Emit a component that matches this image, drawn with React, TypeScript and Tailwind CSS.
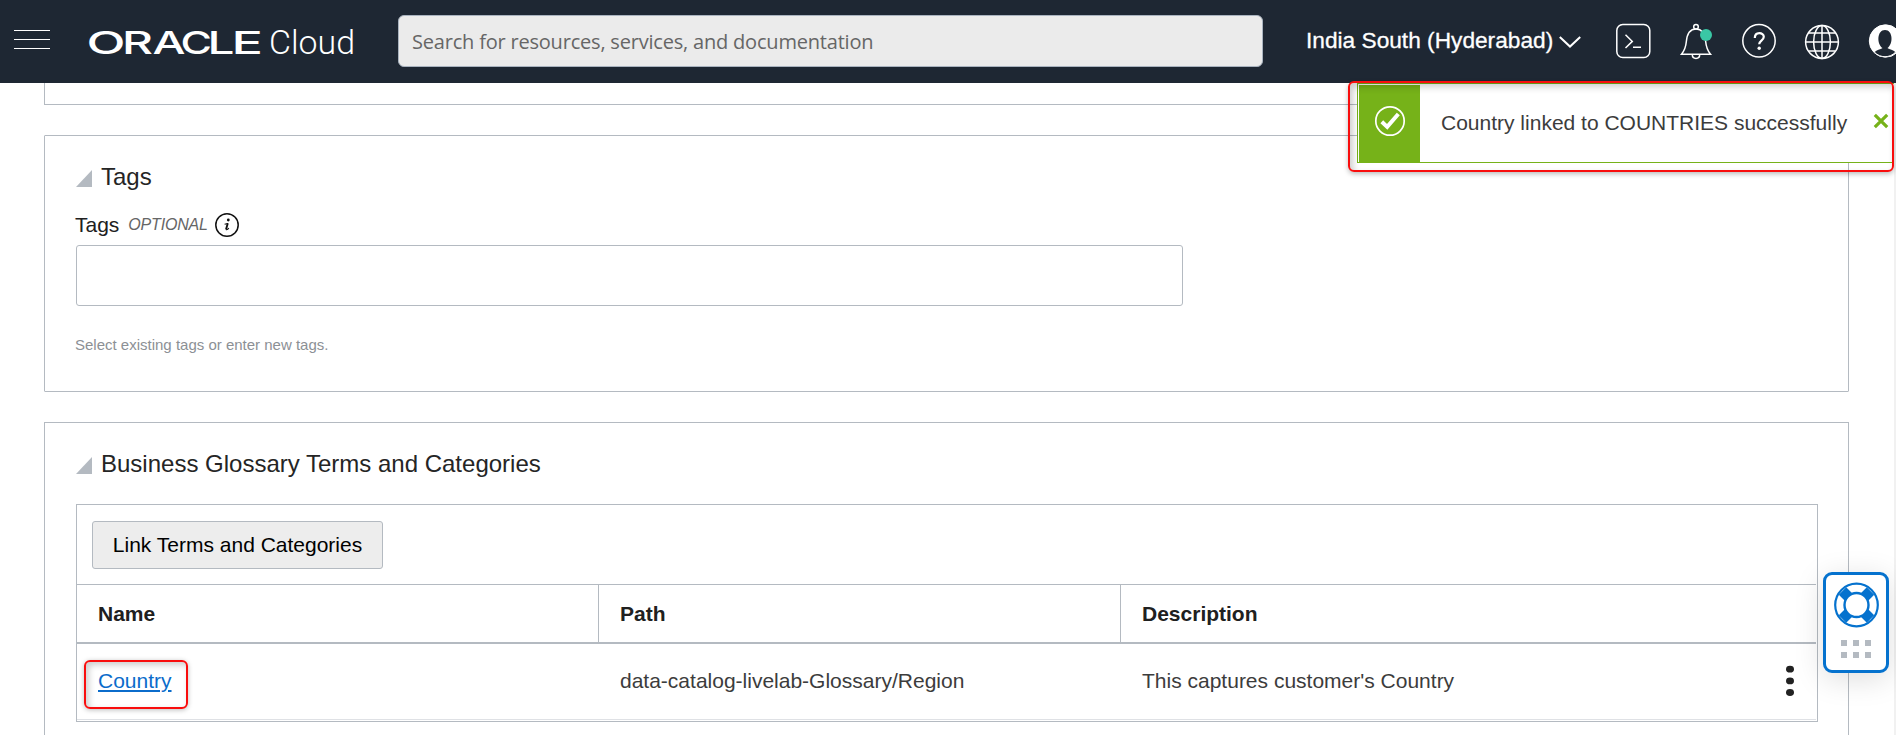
import type { ReactNode } from "react";

const wordmark = [
  { letter: "O", x: 0.5, width: 39 },
  { letter: "R", x: 36, width: 31 },
  { letter: "A", x: 66.5, width: 33 },
  { letter: "C", x: 94.5, width: 31.5 },
  { letter: "L", x: 121.5, width: 27 },
  { letter: "E", x: 145.5, width: 31.5 },
];

function Header() {
  return (
    <header className="flex h-[83px] w-full shrink-0 items-start overflow-hidden bg-[#1e2733] text-white">
      <button aria-label="Menu" className="mt-[30px] ml-[14px] flex w-9 shrink-0 flex-col gap-2">
        <span className="h-px w-full bg-white" />
        <span className="h-px w-full bg-white" />
        <span className="h-px w-full bg-white" />
      </button>
      <svg className="mt-5 ml-[36px] h-[44px] w-[272px] shrink-0" viewBox="0 0 272 44" fill="#fff">
        <text y="34" fontFamily="Inter, sans-serif" fontWeight="500" fontSize="31">
          {wordmark.map(({ letter, x, width }) => (
            <tspan key={letter} x={x} textLength={width} lengthAdjust="spacingAndGlyphs">
              {letter}
            </tspan>
          ))}
        </text>
        <text x="183" y="33.5" fontFamily="Roboto, sans-serif" fontWeight="300" fontSize="33" textLength="86" lengthAdjust="spacingAndGlyphs">
          Cloud
        </text>
      </svg>
      <div className="mt-[15px] ml-[40px] flex h-[52px] w-[865px] shrink-0 items-center rounded-[6px] border border-[#a9b3bf] bg-[#ebebeb] pt-[2px] pl-[13px] font-['Open_Sans',sans-serif] text-[20px] tracking-[-0.2px] text-[#666]">
        <span className="whitespace-nowrap">Search for resources, services, and documentation</span>
      </div>
      <div className="mt-6 ml-[43px] flex shrink-0 items-center text-[22.7px] leading-8">
        <span className="w-[248px] whitespace-nowrap [-webkit-text-stroke:0.3px_white]">India South (Hyderabad)</span>
        <svg className="mt-1 ml-[5px] h-3 w-[22px]" viewBox="0 0 22 12" fill="none" stroke="#fff" strokeWidth="2">
          <path d="M.8 1 11 10.6 21.2 1" />
        </svg>
      </div>
      <svg className="mt-[22px] ml-[33px] h-10 w-10 shrink-0" viewBox="0 0 40 40" fill="none" stroke="#fff" strokeWidth="1.5">
        <rect x="2.8" y="2.5" width="33" height="33" rx="6" />
        <path d="m11.5 12.8 6.800 6.600-6.800 6.600M19 25.200h8" />
      </svg>
      <svg className="mt-[22px] ml-[23px] h-10 w-10 shrink-0" viewBox="0 0 40 40" fill="none" stroke="#fff" strokeWidth="1.5">
        <path d="M4.500 32.200c3-3.600 4.300-7 4.800-12.500.7-7.500 3.200-12.700 9.700-12.700s9 5.200 9.700 12.700c.5 5.500 1.800 8.900 4.800 12.500Z" />
        <circle cx="19" cy="4.800" r="2.300" />
        <path d="M15.300 32.500c0 5.200 7.400 5.200 7.400 0" />
        <circle cx="29" cy="13" r="6" fill="#3ac7a5" stroke="none" />
      </svg>
      <svg className="mt-[22px] ml-[23px] h-10 w-10 shrink-0" viewBox="0 0 40 40" fill="none" stroke="#fff" strokeWidth="1.5">
        <circle cx="19" cy="18.800" r="16.200" />
        <path strokeWidth="2.200" d="M14.800 16c0-6.800 9-6 9-1.200 0 3.700-4.600 4-4.600 7.400" />
        <circle cx="19.200" cy="26.300" r="1.700" fill="#fff" stroke="none" />
      </svg>
      <svg className="mt-[22px] ml-[23px] h-10 w-10 shrink-0" viewBox="0 0 40 40" fill="none" stroke="#fff" strokeWidth="1.5">
        <circle cx="19" cy="20" r="16.400" />
        <ellipse cx="19" cy="20" rx="8.400" ry="16.400" />
        <path d="M19 3.500v33M2.500 20h33M5.500 11h27M5.500 29h27" />
      </svg>
      <svg className="mt-[22px] ml-[23px] h-10 w-10 shrink-0" viewBox="0 0 40 40">
        <circle cx="19.500" cy="19" r="16.200" fill="#fff" stroke="#fff" strokeWidth="1" />
        <path d="M8.500 30.200c3-3 6.500-2.700 8-4.200-6-4-5.500-18 2.500-18s8.500 14 2.500 18c1.500 1.500 5 1.200 8 4.200-5.500 6-15.500 6-21 0Z" fill="#1e2733" />
        <path d="M8.500 30.200c5.500 6 15.500 6 21 0" fill="none" stroke="#fff" strokeWidth="1" />
      </svg>
    </header>
  );
}

function PanelTitle({ children }: { children: ReactNode }) {
  return (
    <h2 className="flex h-8 items-center text-[24px] leading-8 text-[#252525]">
      <svg className="mt-[2px] mr-[9px] h-[17px] w-[16px]" viewBox="0 0 16 17">
        <path d="M16 0v17H0Z" fill="#b4bac1" />
      </svg>
      {children}
    </h2>
  );
}

const columns = ["Name", "Path", "Description"];

export default function App() {
  return (
    <div className="relative flex h-[735px] w-[1896px] flex-col overflow-hidden bg-white font-['Liberation_Sans',Arial,sans-serif] text-[21px] text-[#3c3c3c]">
      <Header />
      <div className="flex min-h-0 flex-1">
        <main className="flex w-[1894px] shrink-0 flex-col pr-[45px] pl-[44px]">
          <section className="h-[22px] shrink-0 border border-t-0 border-[#b4bac1]" />

          <section className="mt-[30px] h-[257px] shrink-0 rounded-[1px] border border-[#b4bac1] pt-[25px] pl-[31px]">
            <PanelTitle>Tags</PanelTitle>
            <div className="mt-[20px] flex h-6 items-center leading-6 text-[#202020]">
              <span className="-ml-px">Tags</span>
              <span className="ml-[9px] text-[16px] tracking-[-0.2px] text-[#666] italic">OPTIONAL</span>
              <svg className="ml-[7px] h-6 w-6" viewBox="0 0 24 24" fill="none" stroke="#111" strokeWidth="1.500">
                <circle cx="12" cy="12" r="11.200" />
                <circle cx="13.300" cy="7" r="1.400" fill="#111" stroke="none" />
                <path strokeWidth="1.900" d="M12.800 10.200 11 16.600" />
                <path strokeWidth="1.100" d="m9.600 11.200 3.300-.7M11 16.700c1.200.2 2.200-.5 2.800-1.600" />
              </svg>
            </div>
            <div className="mt-[8px] h-[61px] w-[1107px] rounded-[3px] border border-[#b4bac1]" />
            <p className="mt-[29px] -ml-px text-[15px] leading-5 text-[#8c9095]">Select existing tags or enter new tags.</p>
          </section>

          <section className="mt-[30px] flex flex-1 flex-col border border-b-0 border-[#b4bac1] px-[31px] pt-[25px]">
            <PanelTitle>Business Glossary Terms and Categories</PanelTitle>
            <div className="mt-[24px] flex h-[218px] w-[1742px] flex-col border border-[#b4bac1]">
              <div className="px-[15px] pt-4">
                <button className="h-[48px] w-[291px] rounded-[3px] border border-[#b4bac1] bg-[#ededed] text-[21px] text-black">
                  Link Terms and Categories
                </button>
              </div>
              <div className="mt-[15px] mr-px grid h-[60px] grid-cols-[522px_522px_1fr] border-t border-b-2 border-[#b4bac1] font-bold text-[#202020]">
                {columns.map((name) => (
                  <div key={name} className="flex items-center border-r border-[#b4bac1] pl-[21px] last:border-r-0">
                    {name}
                  </div>
                ))}
              </div>
              <div className="mr-px grid h-[76px] grid-cols-[522px_522px_1fr_49px] items-center border-b border-[#dfe1e5] pb-[2px]">
                <div className="relative pl-[21px]">
                  <a href="#" className="text-[#0b6ccb] underline decoration-2 underline-offset-[2px]">
                    Country
                  </a>
                  <span className="pointer-events-none absolute top-[-5px] left-[7px] h-[49px] w-[104px] rounded-[6px] border-2 border-[#f90d0d] shadow-[0_1px_5px_#0004,inset_3px_3px_6px_#0003]" />
                </div>
                <div className="pl-[21px]">data-catalog-livelab-Glossary/Region</div>
                <div className="pl-[21px]">This captures customer's Country</div>
                <svg className="mt-px ml-[18px] h-8 w-[10px]" viewBox="0 0 10 32" fill="#222">
                  <ellipse cx="5" cy="4.200" rx="4" ry="3.400" />
                  <ellipse cx="5" cy="15.900" rx="4" ry="3.400" />
                  <ellipse cx="5" cy="27.500" rx="4" ry="3.400" />
                </svg>
              </div>
            </div>
          </section>
        </main>
        <div className="w-[2px] bg-[#f1f1f1]" />
      </div>

      <div className="absolute top-[83px] left-[1357px] flex h-[80px] w-[537px] border border-r-0 border-[#76b219] bg-white">
        <div className="mt-px ml-px flex w-[61px] shrink-0 justify-center bg-[#76b219]">
          <svg className="mt-[20px] h-8 w-8" viewBox="0 0 32 32" fill="none" stroke="#fff">
            <circle cx="16" cy="16" r="14.200" strokeWidth="1.700" />
            <path d="m7.800 16.800 5.400 5.100L24.300 9" strokeWidth="4" />
          </svg>
        </div>
        <span className="mt-[23px] ml-[21px] w-[432px] shrink-0 leading-8 whitespace-nowrap">Country linked to COUNTRIES successfully</span>
        <svg className="mt-[29px] h-4 w-4 shrink-0" viewBox="0 0 16 16" fill="none" stroke="#76b219" strokeWidth="3.200">
          <path d="m1.800 1.800 12.400 12.400M14.200 1.800 1.800 14.200" />
        </svg>
      </div>
      <div className="absolute top-[81px] left-[1348px] h-[91px] w-[546px] rounded-[6px] border-2 border-[#f90d0d] shadow-[0_2px_5px_#0004,inset_3px_4px_7px_#0003]" />

      <div className="absolute top-[572px] left-[1823px] flex h-[101px] w-[66px] flex-col items-center rounded-[9px] border-[3px] border-[#0572ce] bg-white pt-[7px] shadow-[0_6px_30px_#0002]">
        <svg className="h-[46px] w-[46px]" viewBox="0 0 46 46" fill="none" stroke="#0572ce">
          <path d="m9.500 9 28 28M37.500 9l-28 28" strokeWidth="10.500" />
          <circle cx="23.500" cy="23" r="12" strokeWidth="2.400" fill="#fff" />
          <circle cx="23.500" cy="23" r="21.300" strokeWidth="2.200" />
        </svg>
        <div className="mt-[12px] grid grid-cols-3 gap-[6px]">
          {[0, 1, 2, 3, 4, 5].map((n) => (
            <span key={n} className="h-[6px] w-[6px] bg-[#b4bac1]" />
          ))}
        </div>
      </div>
    </div>
  );
}
